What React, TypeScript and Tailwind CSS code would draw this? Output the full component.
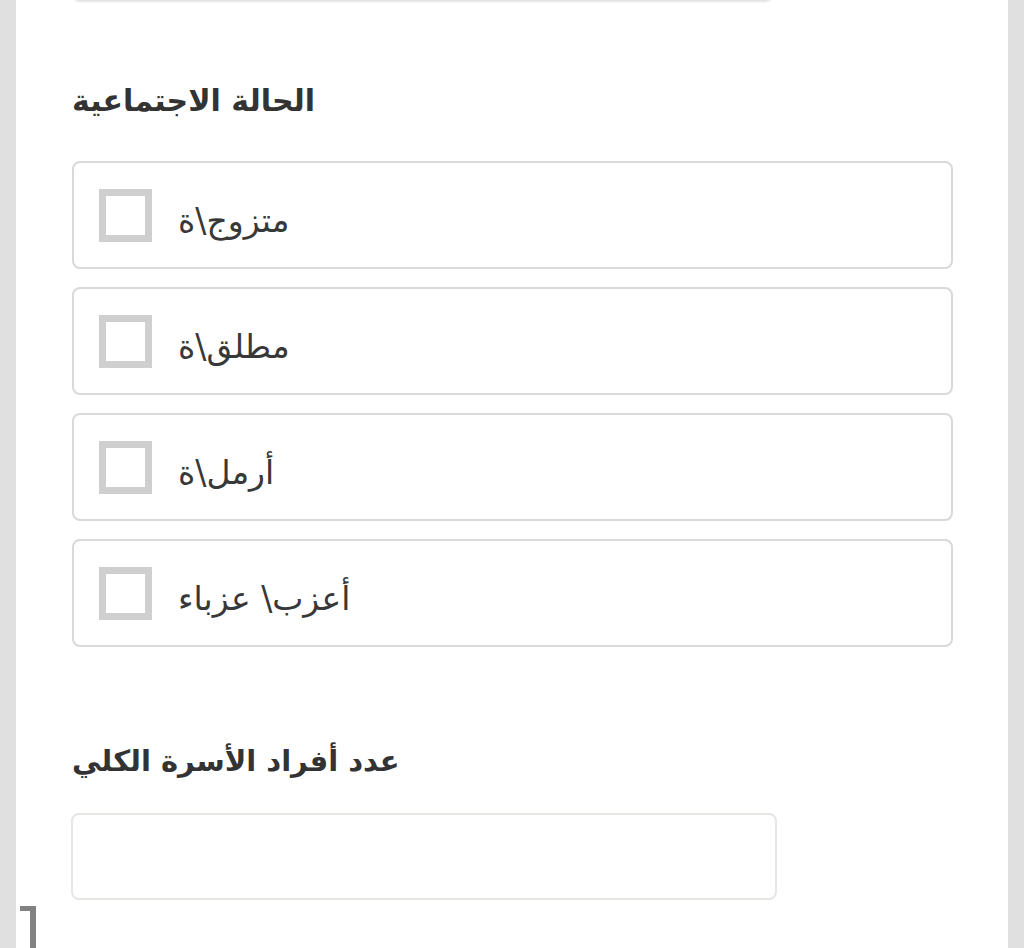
import React from "react";

const options = ["متزوج\\ة", "مطلق\\ة", "أرمل\\ة", "أعزب\\ عزباء"];

export default function App() {
  return (
    <div
      className="relative flex h-[948px] w-[1024px] overflow-hidden bg-white"
      style={{ fontFamily: '"DejaVu Sans", "Noto Sans", sans-serif' }}
    >
      <div className="w-[16px] shrink-0 bg-[#e0e0e0]" />
      <div className="flex flex-1 flex-col pl-[56px]">
        <div className="-mt-[86px] h-[87px] w-[701px] rounded-[8px] border-2 border-[#e2e2e2] shadow-[0_1px_2px_rgba(0,0,0,0.12)]" />
        <div className="mt-[78px] h-[44px] text-[30px] font-bold leading-[44px] text-[#333333]">
          الحالة الاجتماعية
        </div>
        <div className="mt-[38px] flex w-[881px] flex-col gap-[18px]">
          {options.map((o) => (
            <div
              key={o}
              className="flex h-[108px] items-center rounded-[8px] border-2 border-[#d9d9d9] pl-[25px]"
            >
              <div className="h-[53px] w-[53px] shrink-0 border-[7px] border-[#cfcfcf] bg-white" />
              <span className="ml-[26px] mt-[10px] text-[33px] leading-none text-[#383838]">{o}</span>
            </div>
          ))}
        </div>
        <div className="mt-[86px] h-[56px] text-[29px] font-bold leading-[56px] text-[#333333]">
          عدد أفراد الأسرة الكلي
        </div>
        <div className="mt-[24px] h-[87px] w-[706px] -ml-[1px] rounded-[8px] border-2 border-[#e6e6e3]" />
      </div>
      <div className="w-[16px] shrink-0 bg-[#e0e0e0]" />
      <div className="absolute left-[20px] top-[906px] h-[5px] w-[16px] bg-[#828282]" />
      <div className="absolute left-[30px] top-[906px] h-[42px] w-[6px] bg-[#828282]" />
    </div>
  );
}
